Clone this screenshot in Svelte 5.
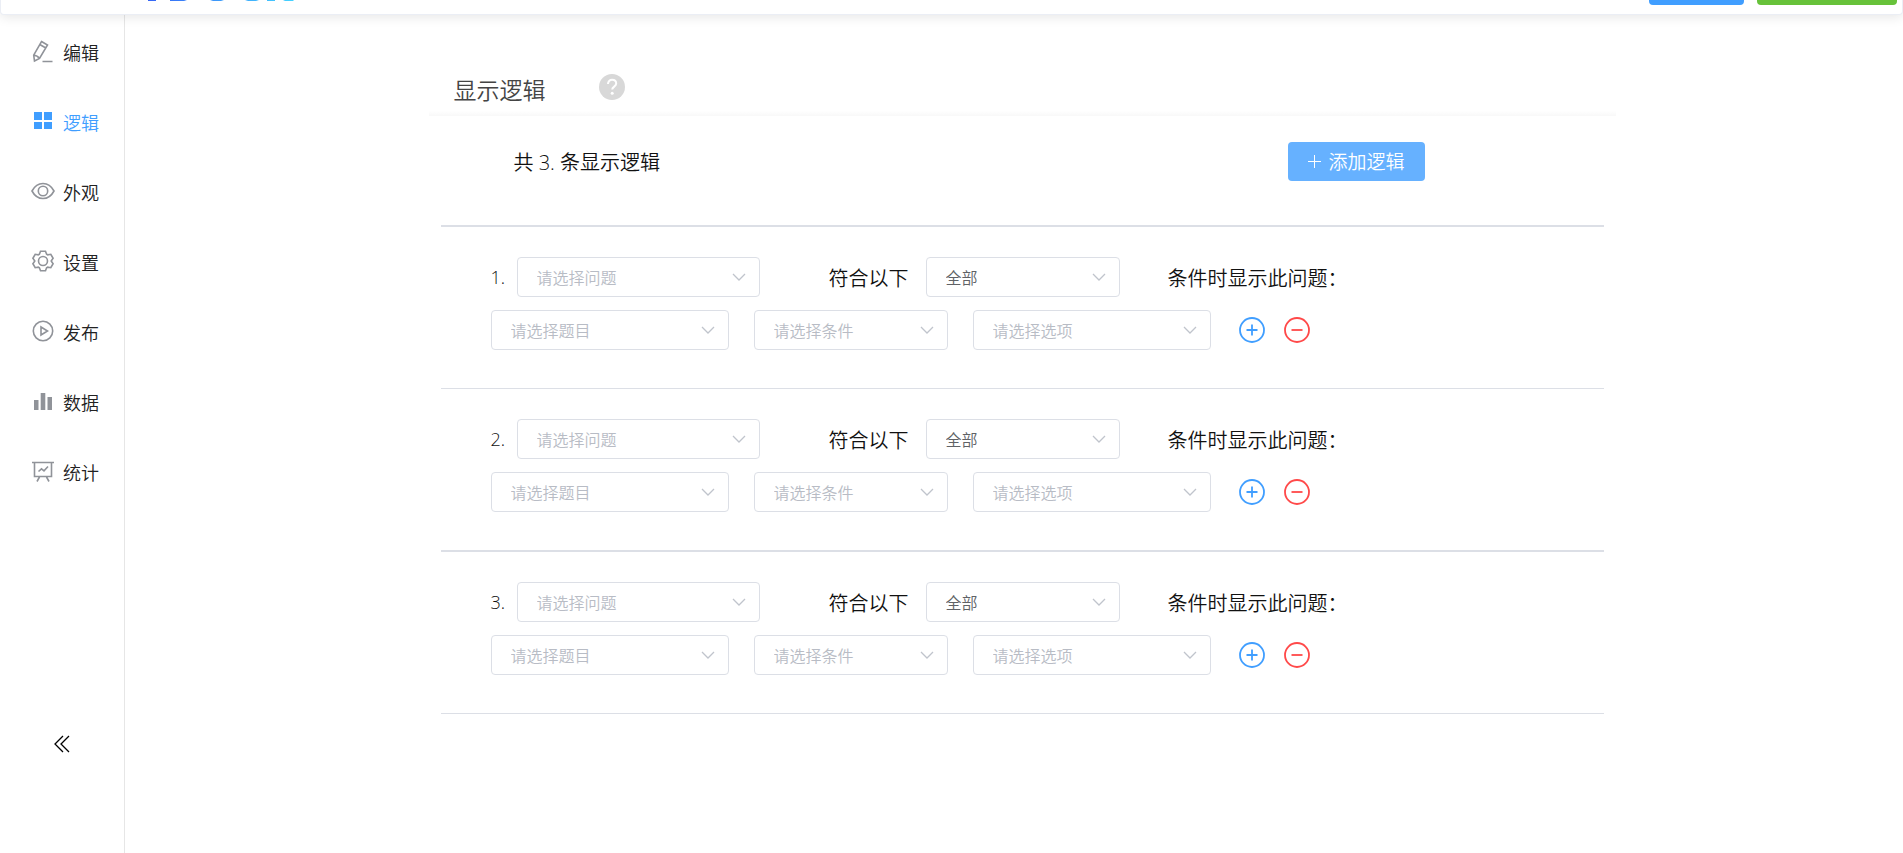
<script lang="ts">
  type Rule = {
    id: number;
    question: string;
    mode: string;
    topic: string;
    condition: string;
    option: string;
  };

  const menu = [
    { key: 'edit', label: '编辑' },
    { key: 'logic', label: '逻辑' },
    { key: 'view', label: '外观' },
    { key: 'setting', label: '设置' },
    { key: 'publish', label: '发布' },
    { key: 'data', label: '数据' },
    { key: 'stats', label: '统计' },
  ];

  let active = $state('logic');
  let collapsed = $state(false);
  let nextId = 4;
  let rules = $state<Rule[]>([1, 2, 3].map(createRule));

  function createRule(id: number): Rule {
    return { id, question: '', mode: 'all', topic: '', condition: '', option: '' };
  }

  function addRule() {
    rules.push(createRule(nextId++));
  }

  function removeRule(id: number) {
    rules = rules.filter((rule) => rule.id !== id);
  }
</script>

{#snippet chevron()}
  <svg class="chevron" viewBox="0 0 14 8" aria-hidden="true">
    <path d="M1 1l6 6 6-6" />
  </svg>
{/snippet}

{#snippet menuIcon(key: string)}
  <svg class="menu-icon" viewBox="0 0 24 24" aria-hidden="true">
    {#if key === 'edit'}
      <path d="M10.5 2.5l6 3.5-8 13.5-5 2.5-.8-5.8zM8.8 5.5l6 3.500M2.700 16.200c2.200 0 4.500 1.300 5.800 3.300M11.500 22.500h10" />
    {:else if key === 'logic'}
      <path class="solid" d="M3 3h8v8H3zM13 3h8v8h-8zM3 13h8v7H3zM13 13h8v7h-8z" />
    {:else if key === 'view'}
      <path d="M1 12c2.500-4.700 6.300-7.500 11-7.500s8.500 2.800 11 7.500c-2.500 4.700-6.300 7.500-11 7.500S3.500 16.700 1 12z" />
      <circle cx="12" cy="12" r="4.700" />
    {:else if key === 'setting'}
      <path d="M9.500 2.300h5l1.100 2.900 1.100.6 3.100-.5 2.300 4-1.900 2.700 1.900 2.700-2.300 4-3.100-.5-1.100.6-1.100 2.900h-5l-1.100-2.900-1.100-.6-3.100.5-2.300-4L3.800 12 1.900 9.300l2.300-4 3.100.5 1.100-.6z" />
      <circle cx="12" cy="12" r="4.500" />
    {:else if key === 'publish'}
      <circle cx="12" cy="12" r="9.700" />
      <path d="M10 8l6.500 4-6.500 4z" />
    {:else if key === 'data'}
      <path class="solid" d="M3 11h4.500v10H3zM9.700 4h4.600v17H9.700zM16.500 8H21v13h-4.500z" />
    {:else}
      <path d="M1 3.500h22M3.500 3.500v14h17v-14M8.500 18l-2.500 4.500M15.500 18l2.500 4.500M7.500 12.500l3-2.700 2.500 2 4-4.300" />
    {/if}
  </svg>
{/snippet}

<div class="app">
  <header class="topbar">
    <a class="brand" href="#home" aria-label="首页">
      <svg viewBox="0 0 148 2" aria-hidden="true">
        <defs>
          <linearGradient id="brand-fill" x1="0" x2="148" gradientUnits="userSpaceOnUse">
            <stop offset="0" stop-color="#3565f5" />
            <stop offset="1" stop-color="#45d4ff" />
          </linearGradient>
        </defs>
        <path
          fill="url(#brand-fill)"
          d="M0 0h8v1H0zM22 0h17l-3 1H22zM62 0h14l-3 1h-8zM97 0h14l-3 1h-8zM119 0h8v1h-8zM135 0h10l1 1h-9z"
        />
      </svg>
    </a>
    <div class="top-actions">
      <button class="preview" type="button" aria-label="预览"></button>
      <button class="save" type="button" aria-label="保存"></button>
    </div>
  </header>

  <div class="body">
    <aside class="sidebar">
      <nav>
        {#each menu as item}
          <a
            class:active={active === item.key}
            href={`#${item.key}`}
            onclick={() => (active = item.key)}
          >
            {@render menuIcon(item.key)}
            {#if !collapsed}<span>{item.label}</span>{/if}
          </a>
        {/each}
      </nav>
      <button
        class="collapse"
        type="button"
        aria-label="收起菜单"
        onclick={() => (collapsed = !collapsed)}
      >
        <svg viewBox="0 0 16 18" aria-hidden="true">
          <path d="M9 1L1 9l8 8M15 1L7 9l8 8" />
        </svg>
      </button>
    </aside>

    <main>
      <section class="panel">
        <div class="panel-head">
          <h1>显示逻辑</h1>
          <button class="help" type="button" aria-label="帮助">
            <svg viewBox="0 0 26 26" aria-hidden="true">
              <circle cx="13" cy="13" r="13" />
              <path d="M9 10c0-2.600 1.700-4.200 4.100-4.200s4.100 1.500 4.100 3.800c0 3-4 3-4 6" />
              <circle class="dot" cx="13.200" cy="19.200" r="1.500" />
            </svg>
          </button>
        </div>

        <div class="panel-body">
          <div class="summary">
            <p>共 {rules.length}. 条显示逻辑</p>
            <button class="add-rule" type="button" onclick={addRule}>
              <svg viewBox="0 0 13 13" aria-hidden="true">
                <path d="M6.500 0v13M0 6.500h13" />
              </svg>
              添加逻辑
            </button>
          </div>

          {#each rules as rule, index (rule.id)}
            <div class="rule">
              <div class="line">
                <span class="number">{index + 1}.</span>
                <div class="field question">
                  <select bind:value={rule.question} class:empty={!rule.question} aria-label="问题">
                    <option value="">请选择问题</option>
                  </select>
                  {@render chevron()}
                </div>
                <label class="match" for={`mode-${rule.id}`}>符合以下</label>
                <div class="field short">
                  <select id={`mode-${rule.id}`} bind:value={rule.mode}>
                    <option value="all">全部</option>
                    <option value="any">任意</option>
                  </select>
                  {@render chevron()}
                </div>
                <span class="tail">条件时显示此问题：</span>
              </div>

              <div class="line conditions">
                <div class="field medium">
                  <select bind:value={rule.topic} class:empty={!rule.topic} aria-label="题目">
                    <option value="">请选择题目</option>
                  </select>
                  {@render chevron()}
                </div>
                <div class="field short">
                  <select bind:value={rule.condition} class:empty={!rule.condition} aria-label="条件">
                    <option value="">请选择条件</option>
                  </select>
                  {@render chevron()}
                </div>
                <div class="field medium">
                  <select bind:value={rule.option} class:empty={!rule.option} aria-label="选项">
                    <option value="">请选择选项</option>
                  </select>
                  {@render chevron()}
                </div>
                <div class="row-actions">
                  <button class="plus" type="button" aria-label="添加条件" onclick={addRule}>
                    <svg viewBox="0 0 26 26" aria-hidden="true">
                      <circle cx="13" cy="13" r="12" />
                      <path d="M13 7.500v11M7.500 13h11" />
                    </svg>
                  </button>
                  <button
                    class="minus"
                    type="button"
                    aria-label="删除条件"
                    onclick={() => removeRule(rule.id)}
                  >
                    <svg viewBox="0 0 26 26" aria-hidden="true">
                      <circle cx="13" cy="13" r="12" />
                      <path d="M7.500 13h11" />
                    </svg>
                  </button>
                </div>
              </div>
            </div>
          {/each}
        </div>
      </section>
    </main>
  </div>
</div>

<style>
  :global(body) {
    margin: 0;
    background: #fff;
  }

  .app {
    display: flex;
    flex-direction: column;
    min-height: 100vh;
    color: #111;
    font-family: 'Open Sans', 'Noto Sans CJK SC', sans-serif;
    font-weight: 350;
  }

  .app,
  .app * {
    box-sizing: border-box;
  }

  button {
    padding: 0;
    border: 0;
    background: none;
    font: inherit;
    cursor: pointer;
  }

  svg {
    display: block;
    flex: none;
    fill: none;
  }

  .topbar {
    position: relative;
    display: flex;
    justify-content: space-between;
    align-items: flex-start;
    height: 15px;
    padding: 0 5px 0 147px;
    background: #fff;
    border: 1px solid #ebeef5;
    border-top: 0;
    border-radius: 0 0 4px 4px;
    box-shadow: 0 2px 12px rgba(0, 0, 0, 0.1);
  }

  .brand svg {
    width: 148px;
    height: 2px;
  }

  .top-actions {
    display: flex;
    gap: 13px;
  }

  .top-actions button {
    height: 5px;
    border-radius: 0 0 4px 4px;
  }

  .top-actions .preview {
    width: 95px;
    background: #409eff;
  }

  .top-actions .save {
    width: 140px;
    background: #67c23a;
  }

  .body {
    display: flex;
    flex: 1;
  }

  .sidebar {
    display: flex;
    flex: none;
    flex-direction: column;
    align-items: center;
    width: 125px;
    padding-top: 2px;
    border-right: 1px solid #e6e6e6;
  }

  nav {
    width: 100%;
  }

  nav a {
    display: flex;
    align-items: center;
    gap: 8px;
    height: 70px;
    padding-left: 31px;
    color: #222;
    font-size: 18px;
    text-decoration: none;
  }

  .menu-icon {
    width: 24px;
    height: 24px;
    margin-bottom: 2px;
    stroke: #909399;
    stroke-width: 1.6;
  }

  .menu-icon .solid {
    fill: #909399;
    stroke: none;
  }

  nav a.active {
    color: #409eff;
  }

  nav a.active .solid {
    fill: #409eff;
  }

  .collapse {
    margin-top: 228px;
  }

  .collapse svg {
    width: 16px;
    height: 18px;
    stroke: #000;
    stroke-width: 1.3;
  }

  main {
    flex: 1;
    padding: 45px 0 45px 16px;
  }

  .panel {
    max-width: 1187px;
    margin: 0 auto;
  }

  .panel-head {
    display: flex;
    align-items: center;
    gap: 53px;
    height: 56px;
    padding-left: 25px;
    background: linear-gradient(to top, #f8f8f8, #fff 5px);
  }

  h1 {
    margin: 4px 0 0;
    color: #444;
    font-size: 23px;
    font-weight: 350;
    line-height: 30px;
  }

  .help {
    margin-bottom: 2px;
  }

  .help svg {
    width: 26px;
    height: 26px;
    fill: #d8d8d8;
  }

  .help path {
    fill: none;
    stroke: #fff;
    stroke-width: 2;
  }

  .help .dot {
    fill: #fff;
  }

  .panel-body {
    margin: 0 12px;
  }

  .summary {
    display: flex;
    justify-content: space-between;
    align-items: flex-start;
    height: 111px;
    padding: 26px 179px 0 73px;
    border-bottom: 2px solid #dcdfe6;
  }

  .summary p {
    margin: 0;
    font-size: 20px;
    line-height: 42px;
  }

  .add-rule {
    display: flex;
    align-items: center;
    gap: 7px;
    height: 39px;
    padding: 0 20px 2px;
    background: #66b1ff;
    border-radius: 4px;
    color: #fff;
    font-size: 19px;
  }

  .add-rule svg {
    width: 13px;
    height: 13px;
    margin-top: 2px;
    stroke: #fff;
  }

  .rule {
    padding: 30px 50px 38px;
    border-bottom: 1px solid #dcdfe6;
  }

  .rule:nth-child(odd) {
    border-bottom-width: 2px;
  }

  .line {
    display: flex;
    align-items: center;
    font-size: 20px;
    white-space: nowrap;
  }

  .conditions {
    gap: 25px;
    margin-top: 13px;
  }

  .number {
    width: 26px;
    font-size: 18px;
  }

  .field {
    position: relative;
  }

  .question {
    width: 243px;
  }

  .medium {
    width: 238px;
  }

  .short {
    width: 194px;
  }

  select {
    display: block;
    width: 100%;
    height: 40px;
    padding: 2px 40px 0 19px;
    appearance: none;
    background: #fff;
    border: 1px solid #dcdfe6;
    border-radius: 4px;
    color: #606266;
    font: inherit;
    font-size: 16px;
  }

  select.empty {
    color: #b8bcc5;
  }

  .chevron {
    position: absolute;
    top: 16px;
    right: 14px;
    width: 14px;
    height: 8px;
    stroke: #c0c4cc;
    stroke-width: 1.3;
    pointer-events: none;
  }

  .match {
    margin: 0 17px 0 69px;
  }

  .tail {
    margin-left: 48px;
  }

  .row-actions {
    display: flex;
    gap: 19px;
    margin-left: 3px;
  }

  .row-actions svg {
    width: 26px;
    height: 26px;
    stroke-width: 1.8;
  }

  .plus {
    stroke: #409eff;
  }

  .minus {
    stroke: #ff4949;
  }
</style>
